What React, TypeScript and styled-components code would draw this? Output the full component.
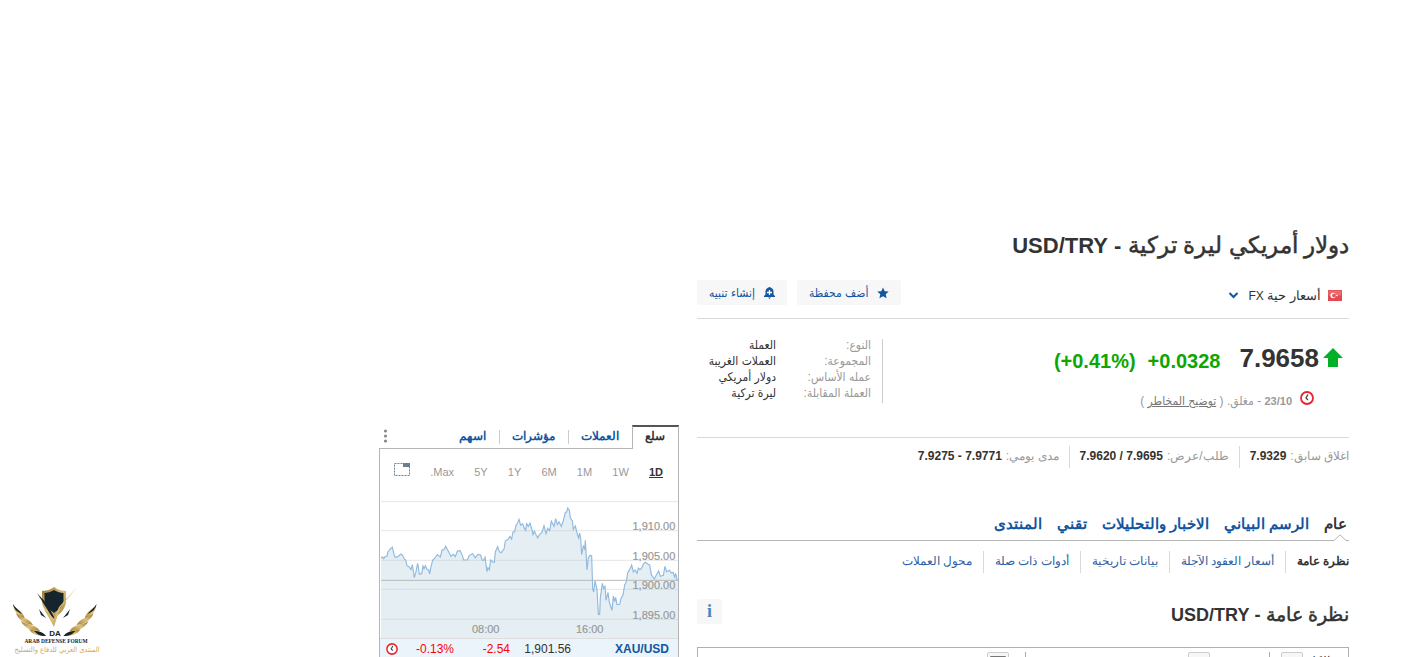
import React from "react";
import styled, { createGlobalStyle, css } from "styled-components";

const GlobalStyle = createGlobalStyle`
  *, *::before, *::after { box-sizing: border-box; }
  body {
    margin: 0;
    background: #fff;
    color: #333;
    font-family: "Liberation Sans", Arial, sans-serif;
    font-size: 12px;
    line-height: 16px;
  }
  h1, h2, dl, dd, dt, p { margin: 0; }
  button { font: inherit; border: 0; background: none; padding: 0; cursor: pointer; }
  a { color: inherit; text-decoration: none; }
  svg { display: block; flex: none; }
`;

const BLUE = "#1256a0";
const RULE = "#d9d9d9";
const NARROW = `"Liberation Sans", "DejaVu Sans Condensed", sans-serif`;

const Page = styled.div`
  direction: rtl;
  height: 100vh;
  overflow: hidden;
  padding: 225px 55px 0;
`;

const Columns = styled.div`
  display: grid;
  grid-template-columns: minmax(0, 652px) 300px;
  column-gap: 18px;
  align-items: start;
`;

const Title = styled.h1`
  height: 55px;
  font-size: 23px;
  line-height: 40px;
  font-weight: 400;
  -webkit-text-stroke: 0.5px #333;

  b { font-size: 22px; -webkit-text-stroke: 0; }
`;

const TopBar = styled.div`
  display: flex;
  justify-content: space-between;
  height: 39px;
  padding-right: 7px;
  border-bottom: 1px solid ${RULE};
`;

const MarketPicker = styled.button`
  display: flex;
  align-items: center;
  align-self: flex-start;
  gap: 7px;
  height: 30px;
  color: #333;
  font-size: 13px;

  span { padding: 2px 0 0 2px; }
  small { font-size: 12px; }
`;

const Actions = styled.div`
  display: flex;
  gap: 10px;
`;

const ActionButton = styled.button`
  display: flex;
  align-items: center;
  gap: 9px;
  height: 25px;
  padding: 0 12px;
  border-radius: 2px;
  background: #f7f7f7;
  color: ${BLUE};
  font-family: ${NARROW};
  line-height: 12px;
`;

const Quote = styled.section`
  display: flex;
  justify-content: space-between;
  height: 119px;
  padding: 20px 5px 0 0;
  border-bottom: 1px solid ${RULE};
`;

const PriceLine = styled.div`
  display: flex;
  align-items: center;
  height: 38px;
  gap: 3px;
  direction: ltr;
  flex-direction: row-reverse;
`;

const Price = styled.span`
  font-size: 26px;
  line-height: 32px;
  font-weight: 700;
`;

const Change = styled.span`
  margin-right: 16px;
  padding-top: 5px;
  font-size: 20px;
  line-height: 28px;
  font-weight: 700;
  color: #0ea600;
  display: flex;
  gap: 12px;
`;

const Status = styled.div`
  display: flex;
  align-items: center;
  gap: 8px;
  height: 42px;
  padding-right: 30px;
  color: #999;
  font-family: ${NARROW};

  span { padding-top: 6px; }
  b { font-size: 11px; }
  a { text-decoration: underline; color: #777; }
`;

const Facts = styled.dl`
  display: grid;
  grid-template-columns: 95px 79px;
  grid-auto-rows: 16px;
  height: 64px;
  padding-right: 11px;
  border-right: 1px solid #ccc;
  font-family: ${NARROW};
  line-height: 12px;
  white-space: nowrap;

  dt { color: #999; }
`;

const Stats = styled.dl`
  display: flex;
  padding-top: 8px;
  height: 76px;

  div {
    display: flex;
    align-items: center;
    gap: 4px;
    height: 22px;
    padding: 0 10px 2px;
    border-left: 1px solid ${RULE};
  }
  div:first-child { padding-right: 0; }
  div:last-child { border-left: 0; }
  dt { color: #999; }
  dd { font-weight: 700; direction: ltr; }
`;

const MainTabs = styled.nav`
  position: relative;
  display: flex;
  gap: 15px;
  height: 27px;
  padding-right: 2px;
  border-bottom: 1px solid #b5b5b5;
  font-size: 15px;
  line-height: 20px;
  font-weight: 700;
`;

const TabLink = styled.a<{ $active?: boolean }>`
  color: ${(p) => (p.$active ? "#333" : BLUE)};
`;

const Notch = styled.svg`
  position: absolute;
  right: 3px;
  bottom: -1px;
`;

const SubTabs = styled.nav`
  display: flex;
  padding-top: 10px;
  line-height: 20px;
`;

const SubTab = styled.a<{ $active?: boolean }>`
  height: 22px;
  padding: 0 11px;
  border-left: 1px solid ${RULE};
  color: #2f62a3;
  ${(p) => p.$active && css`font-weight: 700; color: #333;`}
  &:first-child { padding-right: 0; }
  &:last-child { border-left: 0; }
`;

const SectionHead = styled.div`
  display: flex;
  justify-content: space-between;
  height: 48px;
  margin-top: 26px;
`;

const SectionTitle = styled.h2`
  font-size: 19px;
  line-height: 32px;
  font-weight: 400;
  -webkit-text-stroke: 0.5px #333;

  b { font-size: 18px; -webkit-text-stroke: 0; }
`;

const InfoButton = styled.button`
  width: 25px;
  height: 25px;
  border-radius: 2px;
  background: #f7f7f7;
  color: #4b83c0;
  font: 700 18px/25px "Liberation Serif", serif;
`;

const ChartToolbar = styled.div`
  display: flex;
  height: 40px;
  padding: 4px 18px 0 14px;
  border: 1px solid #b0b0b0;
`;

const ToolGroup = styled.div<{ $width: number; $start?: number }>`
  display: flex;
  gap: 4px;
  width: ${(p) => p.$width}px;
  height: 25px;
  padding-right: ${(p) => p.$start ?? 0}px;
  border-left: 1px solid #aaa;
  line-height: 18px;
  &:last-child { border-left: 0; }
`;

const ToolButton = styled.button`
  display: flex;
  justify-content: center;
  width: 22px;
  height: 24px;
  padding-top: 3px;
  border: 1px solid #ccc;
  border-radius: 2px;
  background: #f7f7f7;
`;

const Side = styled.aside`
  padding-top: 200px;
`;

const SideTabs = styled.nav`
  display: flex;
  align-items: center;
  height: 23px;
  font-weight: 700;
`;

const SideTab = styled.a<{ $active?: boolean }>`
  height: 14px;
  padding: 0 13px 0 12px;
  line-height: 12px;
  color: ${BLUE};
  border-left: 1px solid #ccc;
  ${(p) =>
    p.$active &&
    css`
      height: 24px;
      margin-bottom: -1px;
      line-height: 18px;
      color: #333;
      background: #fff;
      border: 1px solid #b5b5b5;
      border-top: 2px solid #555;
      border-bottom: 0;
    `}
  &:nth-last-child(2) { border-left: 0; }
`;

const MoreButton = styled.button`
  margin: 0 auto 2px 4px;
`;

const SideBox = styled.div`
  border: 1px solid #b5b5b5;
`;

const Ranges = styled.div`
  display: flex;
  align-items: center;
  justify-content: space-between;
  height: 51px;
  padding: 0 15px 6px 14px;
  font-size: 11px;
`;

const RangeButton = styled.button<{ $active?: boolean }>`
  color: #999;
  ${(p) => p.$active && css`font-weight: 700; color: #333; text-decoration: underline;`}
  svg { margin-bottom: 4px; }
`;

const ChartSvg = styled.svg`
  width: 100%;
  height: auto;
  direction: ltr;
  font-size: 33px;
`;

const QuoteRow = styled.div`
  display: grid;
  grid-template-columns: 98px 61px 56px auto 1fr;
  align-items: center;
  justify-items: start;
  height: 21px;
  padding: 0 9px 0 6px;
  border-top: 1px solid #ddd;
  background: #ecf4fb;

  > svg { justify-self: end; }
`;

const Figure = styled.span<{ $down?: boolean }>`
  direction: ltr;
  color: ${(p) => (p.$down ? "#f00" : "#333")};
`;

const Symbol = styled.a`
  font-weight: 700;
  color: ${BLUE};
`;

const Watermark = styled.svg`
  position: absolute;
  left: 10px;
  bottom: 0;
  font-family: ${NARROW};
`;

const LINE: number[][] = [
  [3, 174], [8, 171], [11, 176], [15, 170], [21, 168], [24, 155], [31, 147], [37, 142], [42, 163], [45, 172], [54, 170],
  [62, 162], [68, 166], [73, 177], [77, 180], [81, 197], [88, 201], [93, 209], [97, 194], [103, 233], [108, 215],
  [113, 190], [118, 222], [125, 221], [129, 198], [132, 206], [136, 197], [141, 208], [146, 210], [149, 222],
  [153, 200], [158, 181], [165, 174], [172, 164], [181, 171], [186, 150], [192, 149], [197, 139], [205, 154],
  [213, 169], [220, 163], [226, 170], [232, 153], [240, 152], [247, 166], [251, 180], [262, 180], [268, 166],
  [278, 161], [286, 173], [294, 163], [302, 165], [306, 180], [311, 181], [315, 172], [321, 215], [324, 203],
  [328, 209], [332, 180], [338, 186], [343, 187], [346, 156], [353, 140], [358, 155], [363, 158], [372, 147],
  [376, 123], [384, 118], [390, 109], [395, 117], [399, 96], [404, 95], [408, 76], [413, 69], [417, 58], [422, 76],
  [428, 71], [432, 83], [437, 91], [440, 71], [445, 79], [450, 69], [456, 90], [459, 104], [463, 93], [468, 104],
  [473, 114], [478, 104], [486, 97], [492, 77], [498, 101], [503, 85], [509, 92], [514, 64], [522, 79], [527, 56],
  [532, 74], [537, 66], [544, 79], [550, 62], [556, 37], [560, 36], [563, 24], [568, 30], [571, 54], [577, 62],
  [580, 88], [586, 78], [591, 99], [596, 114], [599, 99], [602, 116], [605, 164], [610, 139], [614, 147],
  [616, 121], [621, 210], [625, 174], [630, 166], [635, 167], [638, 267], [641, 276], [645, 243], [651, 268],
  [655, 343], [659, 343], [661, 293], [667, 250], [671, 265], [675, 259], [678, 301], [684, 277], [688, 306],
  [696, 331], [700, 288], [704, 305], [707, 292], [711, 314], [719, 313], [723, 295], [729, 285], [734, 255],
  [739, 245], [743, 218], [749, 209], [755, 195], [760, 216], [765, 210], [771, 220], [775, 204], [780, 209],
  [786, 203], [790, 192], [796, 187], [803, 192], [809, 195], [814, 224], [823, 237], [829, 225], [836, 213],
  [841, 229], [850, 226], [855, 199], [860, 215], [868, 211], [874, 219], [879, 217], [884, 231], [887, 220],
  [891, 239], [897, 240],
];
const points = LINE.map((p) => p.join(",")).join(" ");

const PRICES: [string, number][] = [
  ["1,910.00", 90],
  ["1,905.00", 180],
  ["1,900.00", 267],
  ["1,895.00", 357],
];

function Chart() {
  return (
    <ChartSvg viewBox="0 0 894 414" role="img" aria-label="XAU/USD">
      {[5, 92, 181, 268, 358].map((y) => (
        <line key={y} x1="3" x2="897" y1={y} y2={y} stroke="#e6e6e6" strokeWidth="3" />
      ))}
      <polygon points={`3,414 ${points} 897,414`} fill="#b4d0dd" fillOpacity="0.35" />
      <polyline points={points} fill="none" stroke="#8fb9de" strokeWidth="3.4" />
      <line x1="3" x2="897" y1="241" y2="241" stroke="#b8b8b8" strokeWidth="3" />
      <g fill="#999" stroke="#999" strokeWidth="0.6">
        {PRICES.map(([label, y]) => (
          <text key={label} x="886" y={y} textAnchor="end">{label}</text>
        ))}
        <text x="317" y="399" textAnchor="middle">08:00</text>
        <text x="629" y="399" textAnchor="middle">16:00</text>
      </g>
    </ChartSvg>
  );
}

function Clock({ size }: { size: number }) {
  return (
    <svg width={size} height={size} viewBox="0 0 14 14" fill="none">
      <circle cx="7" cy="7" r="6" fill="#fff" stroke="#e8252c" strokeWidth="1.8" />
      <path d="M8 3.500 6 7 8 9" stroke="#444" strokeWidth="1.3" />
    </svg>
  );
}

function Logo() {
  return (
    <Watermark width="94" height="76" viewBox="0 0 94 76" aria-hidden="true">
      <defs>
        <linearGradient id="gold" x1="0" x2="1" y1="0" y2="1">
          <stop offset="0" stopColor="#94722f" />
          <stop offset=".5" stopColor="#dcc079" />
          <stop offset="1" stopColor="#a07c36" />
        </linearGradient>
      </defs>
      {["", "translate(89.500 0) scale(-1 1)"].map((t) => (
        <g key={t} transform={t || undefined}>
          <path d="M3 23C5 28 13 29 15 38 9 36 4 31 3 23Z" fill="url(#gold)" />
          <path d="M6 32C10 37 19 36 23 44 15 43 8 39 6 32Z" fill="url(#gold)" />
          <path d="M11 40C16 44 26 43 30 50 22 50 14 47 11 40Z" fill="url(#gold)" />
          <path d="M19 48C24 50 30 49 36 55 29 55 22 54 19 48Z" fill="url(#gold)" />
          <path d="M3 23C5 27 9 29 12 33 7 31 4 28 3 23ZM24 50C29 50 33 51 36 55 30 55 27 53 24 50Z" fill="#16242e" />
        </g>
      ))}
      <path d="M44 6C40 9 35 10 32 10V21C33 29 39 34 44 37 49 34 55 29 56 21V10C53 10 48 9 44 6Z" fill="url(#gold)" />
      <path d="M44 9C41 11 37 12 34.500 12V20C35.500 26 40 29 44 32 48 29 52.500 26 53.500 20V12C51 12 47 11 44 9Z" fill="#16242e" />
      <path d="M27 12 38 24 46 40 42 36Z" fill="#16242e" />
      <path d="M67 6 50 27 44 46 34 28 44 38 49 26Z" fill="url(#gold)" />
      <path d="M29 28 32 32 36 37 31 34ZM60 28 57 32 53 37 58 34Z" fill="#16242e" />
      <text x="45" y="55" textAnchor="middle" fontSize="8" fontWeight="700" fill="#16242e">DA</text>
      <text x="46" y="62" textAnchor="middle" fontSize="5.400" fontWeight="700" fill="#16242e" fontFamily="Liberation Serif">ARAB DEFENSE FORUM</text>
      <text x="47" y="71" textAnchor="middle" fontSize="7.400" fill="#d0aa5c">المنتدى العربي للدفاع والتسليح</text>
    </Watermark>
  );
}

const FACTS = [
  ["النوع:", "العملة"],
  ["المجموعة:", "العملات الغريبة"],
  ["عمله الأساس:", "دولار أمريكي"],
  ["العملة المقابلة:", "ليرة تركية"],
];
const STATS = [
  ["اغلاق سابق:", "7.9329"],
  ["طلب/عرض:", "7.9620 / 7.9695"],
  ["مدى يومي:", "7.9275 - 7.9771"],
];
const TABS = ["عام", "الرسم البياني", "الاخبار والتحليلات", "تقني", "المنتدى"];
const SUBTABS = ["نظرة عامة", "أسعار العقود الآجلة", "بيانات تاريخية", "أدوات ذات صلة", "محول العملات"];
const SIDE_TABS = ["سلع", "العملات", "مؤشرات", "اسهم"];
const RANGES = ["1D", "1W", "1M", "6M", "1Y", "5Y", "Max."];

export default function App() {
  return (
    <Page>
      <GlobalStyle />
      <Columns>
        <main>
          <Title>دولار أمريكي ليرة تركية <b>- USD/TRY</b></Title>
          <TopBar>
            <MarketPicker>
              <svg width="14" height="11" viewBox="0 0 14 11">
                <rect width="14" height="11" fill="#e04a50" />
                <rect x=".5" y=".5" width="13" height="5" fill="#ee8084" opacity=".6" />
                <circle cx="5.2" cy="5.5" r="2.7" fill="#fff" />
                <circle cx="6.1" cy="5.5" r="2" fill="#e2585d" />
                <path d="m7.4 5.5 2.2-1v2Z" fill="#fff" />
              </svg>
              <span>أسعار حية <small>FX</small></span>
              <svg width="11" height="7" viewBox="0 0 11 7">
                <path d="m1.5 1 4 4 4-4" fill="none" stroke={BLUE} strokeWidth="2" />
              </svg>
            </MarketPicker>
            <Actions>
              <ActionButton>
                <svg width="12" height="12" viewBox="0 0 12 12">
                  <path d="m6 .5 1.7 3.7 4 .4-3 2.7.9 4L6 9.300 2.400 11.300l.9-4-3-2.700 4-.4Z" fill={BLUE} />
                </svg>
                أضف محفظة
              </ActionButton>
              <ActionButton>
                <svg width="11" height="12" viewBox="0 0 11 12">
                  <path d="M5.500 0C3 .6 1.500 2.300 1.500 4.500V7.500L0 9V10H11V9L9.500 7.500V4.500C9.500 2.300 8 .6 5.500 0ZM4 10.500H7L5.500 12Z" fill={BLUE} />
                  <path d="M5.500 3V8M3 5.500H8" stroke="#fff" strokeWidth="1.300" />
                </svg>
                إنشاء تنبيه
              </ActionButton>
            </Actions>
          </TopBar>

          <Quote>
            <div>
              <PriceLine>
                <svg width="22" height="20" viewBox="0 0 22 20">
                  <path d="M11 0 21 10H16V19H6V10H1Z" fill="#00b127" />
                </svg>
                <Price>7.9658</Price>
                <Change>
                  <span>(+0.41%)</span>
                  <span>+0.0328</span>
                </Change>
              </PriceLine>
              <Status>
                <Clock size={14} />
                <span>
                  <b>23/10</b> - مغلق. ( <a href="#risk">توضيح المخاطر</a> )
                </span>
              </Status>
            </div>
            <Facts>
              {FACTS.map(([k, v]) => (
                <React.Fragment key={k}>
                  <dt>{k}</dt>
                  <dd>{v}</dd>
                </React.Fragment>
              ))}
            </Facts>
          </Quote>

          <Stats>
            {STATS.map(([k, v]) => (
              <div key={k}>
                <dt>{k}</dt>
                <dd>{v}</dd>
              </div>
            ))}
          </Stats>

          <MainTabs>
            {TABS.map((t, i) => (
              <TabLink key={t} href="#" $active={i === 0}>{t}</TabLink>
            ))}
            <Notch width="12" height="7" viewBox="0 0 12 7">
              <path d="M0 6.500 6 .8 12 6.500V7H0Z" fill="#fff" />
              <path d="M0 6.500 6 .8 12 6.500" fill="none" stroke="#b5b5b5" />
            </Notch>
          </MainTabs>
          <SubTabs>
            {SUBTABS.map((t, i) => (
              <SubTab key={t} href="#" $active={i === 0}>{t}</SubTab>
            ))}
          </SubTabs>

          <SectionHead>
            <SectionTitle>نظرة عامة <b>- USD/TRY</b></SectionTitle>
            <InfoButton>i</InfoButton>
          </SectionHead>
          <ChartToolbar>
            <ToolGroup $width={61}>
              <span>الكل</span>
              <ToolButton aria-label="الكل" />
            </ToolGroup>
            <ToolGroup $width={244} $start={59}>
              <ToolButton aria-label="نوع الرسم" />
            </ToolGroup>
            <ToolGroup $width={38} $start={16}>
              <ToolButton aria-label="تخطيط">
                <svg width="16" height="12" viewBox="0 0 16 12">
                  <path d="M.5 .5H15.500V11.500H.5Z" fill="#fff" stroke="#777" />
                </svg>
              </ToolButton>
            </ToolGroup>
          </ChartToolbar>
        </main>

        <Side>
          <SideTabs>
            {SIDE_TABS.map((t, i) => (
              <SideTab key={t} href="#" $active={i === 0}>{t}</SideTab>
            ))}
            <MoreButton aria-label="المزيد">
              <svg width="5" height="14" viewBox="0 0 5 14" fill="#888">
                <circle cx="2.500" cy="2" r="1.600" />
                <circle cx="2.500" cy="7" r="1.600" />
                <circle cx="2.500" cy="12" r="1.600" />
              </svg>
            </MoreButton>
          </SideTabs>
          <SideBox>
            <Ranges>
              {RANGES.map((r, i) => (
                <RangeButton key={r} $active={i === 0}>{r}</RangeButton>
              ))}
              <RangeButton aria-label="تكبير">
                <svg width="16" height="13" viewBox="0 0 16 13">
                  <path d="M.5 .5H15.500V12.500H.5Z" fill="none" stroke="#6c7f8f" strokeDasharray="2 1" />
                  <path d="M9 0H16V4H9Z" fill="#6c7f8f" />
                </svg>
              </RangeButton>
            </Ranges>
            <Chart />
            <QuoteRow>
              <Symbol href="#">XAU/USD</Symbol>
              <Figure>1,901.56</Figure>
              <Figure $down>-2.54</Figure>
              <Figure $down>-0.13%</Figure>
              <Clock size={12} />
            </QuoteRow>
          </SideBox>
        </Side>
      </Columns>
      <Logo />
    </Page>
  );
}
